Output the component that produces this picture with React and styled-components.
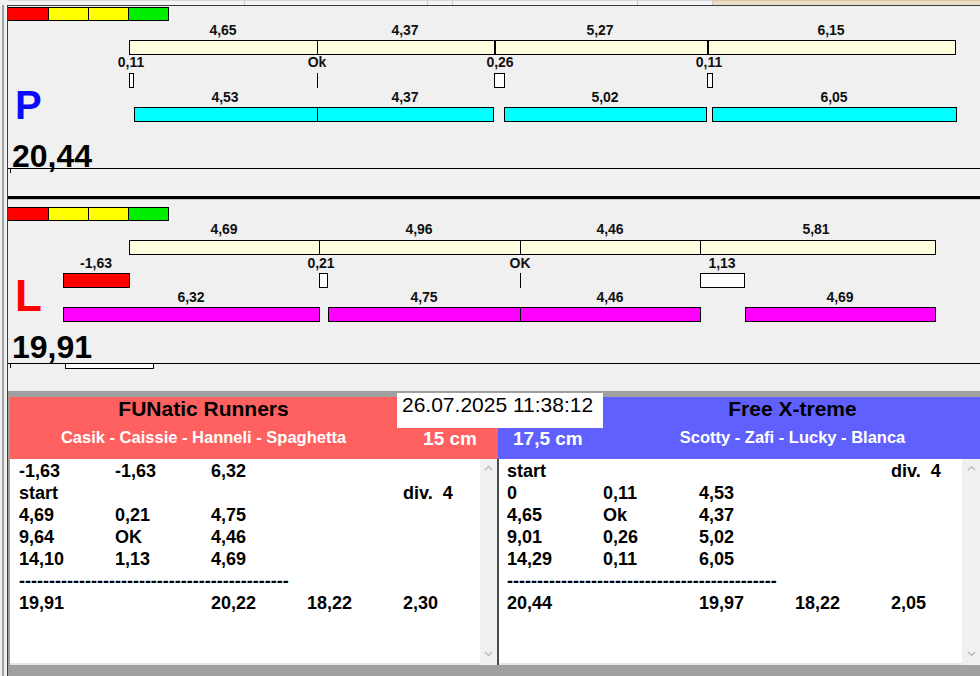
import React from 'react';
import styled, { createGlobalStyle } from 'styled-components';

const GlobalStyle = createGlobalStyle`
    html, body {
        margin: 0;
        padding: 0;
        background: #f0f0f0;
    }
    * {
        box-sizing: border-box;
    }
`;

// x values are screen coordinates, the chart panel begins at x = 8
const OX = 8;

const PANELS = [
    {
        letter: 'P',
        letterColor: '#0a0aff',
        letterSize: 40,
        total: '20,44',
        y: { strip: 1, r1: 17, bar: 34, r2: 49, mk: 67, r3: 84, bar2: 101, letter: 79, total: 134 },
        top: {
            x0: 129, x1: 956,
            cuts: [{ x: 317, w: 1 }, { x: 494, w: 2 }, { x: 707, w: 2 }],
            labels: [[223, '4,65'], [405, '4,37'], [600, '5,27'], [831, '6,15']],
        },
        marks: [
            { x: 129, w: 5, label: '0,11', lx: 131 },
            { x: 317, w: 0, label: 'Ok', lx: 317 },
            { x: 494, w: 11, label: '0,26', lx: 500 },
            { x: 707, w: 6, label: '0,11', lx: 709 },
        ],
        barColor: '#00ffff',
        bars: [
            { x0: 134, x1: 494, cuts: [317] },
            { x0: 504, x1: 707, cuts: [] },
            { x0: 712, x1: 957, cuts: [] },
        ],
        barLabels: [[225, '4,53'], [405, '4,37'], [605, '5,02'], [834, '6,05']],
        height: 162,
    },
    {
        letter: 'L',
        letterColor: '#ff0000',
        letterSize: 44,
        total: '19,91',
        y: { strip: 7, r1: 22, bar: 40, r2: 56, mk: 73, r3: 90, bar2: 107, letter: 74, total: 131 },
        top: {
            x0: 129, x1: 936,
            cuts: [{ x: 319, w: 1 }, { x: 520, w: 1 }, { x: 700, w: 1 }],
            labels: [[224, '4,69'], [419, '4,96'], [610, '4,46'], [816, '5,81']],
        },
        marks: [
            { x: 63, w: 67, label: '-1,63', lx: 96, red: true },
            { x: 319, w: 9, label: '0,21', lx: 321 },
            { x: 520, w: 0, label: 'OK', lx: 520 },
            { x: 700, w: 45, label: '1,13', lx: 722 },
        ],
        barColor: '#ff00ff',
        bars: [
            { x0: 63, x1: 320, cuts: [] },
            { x0: 328, x1: 701, cuts: [520] },
            { x0: 745, x1: 936, cuts: [] },
        ],
        barLabels: [[191, '6,32'], [424, '4,75'], [610, '4,46'], [840, '4,69']],
        height: 163,
    },
];

const STRIP = ['#ff0000', '#ffff00', '#ffff00', '#00ee00'];

const LEFT_ROWS = [
    ['-1,63', '-1,63', '6,32', '', ''],
    ['start', '', '', '', 'div.  4'],
    ['4,69', '0,21', '4,75', '', ''],
    ['9,64', 'OK', '4,46', '', ''],
    ['14,10', '1,13', '4,69', '', ''],
    'dash',
    ['19,91', '', '20,22', '18,22', '2,30'],
];

const RIGHT_ROWS = [
    ['start', '', '', '', 'div.  4'],
    ['0', '0,11', '4,53', '', ''],
    ['4,65', 'Ok', '4,37', '', ''],
    ['9,01', '0,26', '5,02', '', ''],
    ['14,29', '0,11', '6,05', '', ''],
    'dash',
    ['20,44', '', '19,97', '18,22', '2,05'],
];

function Chevron({ down }) {
    return (
        <svg width="9" height="6" viewBox="0 0 9 6">
            <polyline
                points={down ? '1,1 4.5,4.5 8,1' : '1,5 4.5,1.5 8,5'}
                fill="none"
                stroke="#b4b4b4"
                strokeWidth="1.2"
            />
        </svg>
    );
}

function ChartPanel({ data }) {
    const { y } = data;
    return (
        <Panel $h={data.height}>
            <Strip style={{ top: y.strip }}>
                {STRIP.map((c, i) => <StripCell key={i} $color={c} />)}
            </Strip>

            {data.top.labels.map(([x, t]) => (
                <Label key={'t' + x} style={{ left: x - OX, top: y.r1 }}>{t}</Label>
            ))}
            <Bar $color="#ffffe0" style={{ left: data.top.x0 - OX, width: data.top.x1 - data.top.x0, top: y.bar }}>
                {data.top.cuts.map((c) => (
                    <Cut key={c.x} style={{ left: c.x - data.top.x0 - 1, width: c.w }} />
                ))}
            </Bar>

            {data.marks.map((m) => (
                <React.Fragment key={'m' + m.x}>
                    <Label style={{ left: m.lx - OX, top: y.r2 }}>{m.label}</Label>
                    {m.w > 0
                        ? <Marker $red={m.red} style={{ left: m.x - OX, width: m.w, top: y.mk }} />
                        : <MarkLine style={{ left: m.x - OX, top: y.mk }} />}
                </React.Fragment>
            ))}

            {data.barLabels.map(([x, t]) => (
                <Label key={'b' + x} style={{ left: x - OX, top: y.r3 }}>{t}</Label>
            ))}
            {data.bars.map((b) => (
                <Bar key={b.x0} $color={data.barColor} style={{ left: b.x0 - OX, width: b.x1 - b.x0, top: y.bar2 }}>
                    {b.cuts.map((c) => (
                        <Cut key={c} style={{ left: c - b.x0 - 1, width: 1 }} />
                    ))}
                </Bar>
            ))}

            <Letter $color={data.letterColor} $size={data.letterSize} style={{ top: y.letter }}>
                {data.letter}
            </Letter>
            <Total style={{ top: y.total }}>{data.total}</Total>
        </Panel>
    );
}

function ListBox({ rows, pad, width, barWidth }) {
    return (
        <ListWrap $w={width}>
            <TextArea $pad={pad}>
                {rows.map((r, i) =>
                    r === 'dash'
                        ? <Row key={i}><Dashes>{'-'.repeat(45)}</Dashes></Row>
                        : <Row key={i}>{r.map((c, j) => <Cell key={j}>{c}</Cell>)}</Row>
                )}
            </TextArea>
            <ScrollBar $w={barWidth}>
                <Chevron />
                <Chevron down />
            </ScrollBar>
        </ListWrap>
    );
}

export default function App() {
    return (
        <Window>
            <GlobalStyle />
            <TopStrip>
                <Tab $w={237} />
                <Tab $w={183} />
                <Tab $w={25} />
                <Tab $w={185} />
                <Tab $w={75} />
                <TanTab />
            </TopStrip>
            <Body>
                <Edge />
                <Main>
                    <ChartPanel data={PANELS[0]} />
                    <Gap>
                        <Tick />
                    </Gap>
                    <ThickLine />
                    <ChartPanel data={PANELS[1]} />
                    <Gap>
                        <Tick />
                        <Slot />
                    </Gap>
                    <Bottom>
                        <Headers>
                            <TeamHead $color="#ff6060" $w={488}>
                                <TitleArea $w={387}>
                                    <TeamName>FUNatic Runners</TeamName>
                                    <Members>Casik - Caissie - Hanneli - Spaghetta</Members>
                                </TitleArea>
                                <CmArea $align="center" $pad="0 0 0 5px">15 cm</CmArea>
                            </TeamHead>
                            <TeamHead $color="#6060ff">
                                <CmArea $w={107} $align="left" $pad="0 0 0 15px">17,5 cm</CmArea>
                                <TitleArea>
                                    <TeamName>Free X-treme</TeamName>
                                    <Members>Scotty - Zafi - Lucky - Blanca</Members>
                                </TitleArea>
                            </TeamHead>
                            <DateBox>26.07.2025 11:38:12</DateBox>
                        </Headers>
                        <Lists>
                            <ListBox rows={LEFT_ROWS} pad={9} width={487} barWidth={17} />
                            <Divider />
                            <ListBox rows={RIGHT_ROWS} pad={8} width={481} barWidth={18} />
                        </Lists>
                    </Bottom>
                </Main>
            </Body>
        </Window>
    );
}

const Window = styled.div`
    width: 980px;
    height: 676px;
    overflow: hidden;
    display: flex;
    flex-direction: column;
    background: #f0f0f0;
    font-family: "Liberation Sans", Arial, sans-serif;
    color: #000;
`;
const TopStrip = styled.div`
    height: 5px;
    display: flex;
    flex-shrink: 0;
    padding-left: 8px;
`;
const Tab = styled.div`
    width: ${(p) => p.$w}px;
    border-top: 1px solid #d6d6d6;
    border-right: 1px solid #c8c8c8;
    background: #f4f4f4;
`;
const TanTab = styled.div`
    flex: 1;
    background: #ecdfc8;
    border-top: 1px solid #d8c8a8;
`;
const Body = styled.div`
    flex: 1;
    display: flex;
    min-height: 0;
`;
const Edge = styled.div`
    width: 7px;
    flex-shrink: 0;
    background: linear-gradient(to right, #f0f0f0 2px, #a0a0a0 2px, #a0a0a0 4px, #f0f0f0 4px);
`;
const Main = styled.div`
    flex: 1;
    min-width: 0;
    display: flex;
    flex-direction: column;
    border-left: 1px solid #3c3c3c;
    border-top: 1px solid #3c3c3c;
`;
const Panel = styled.div`
    position: relative;
    height: ${(p) => p.$h + 1}px;
    border-bottom: 1px solid #000;
    flex-shrink: 0;
`;
const Strip = styled.div`
    position: absolute;
    left: 0;
    display: flex;
    height: 14px;
    border: 1px solid #000;
    border-left: 0;
`;
const StripCell = styled.div`
    width: 40px;
    background: ${(p) => p.$color};
    & + & {
        border-left: 1px solid #000;
    }
`;
const Label = styled.div`
    position: absolute;
    transform: translateX(-50%);
    font-size: 14px;
    font-weight: bold;
    line-height: 14px;
    white-space: nowrap;
    color: #111;
`;
const Bar = styled.div`
    position: absolute;
    height: 15px;
    background: ${(p) => p.$color};
    border: 1px solid #000;
`;
const Cut = styled.div`
    position: absolute;
    top: 0;
    bottom: 0;
    background: #000;
`;
const Marker = styled.div`
    position: absolute;
    height: 15px;
    background: ${(p) => (p.$red ? '#ff0000' : '#fff')};
    border: 1px solid #000;
`;
const MarkLine = styled.div`
    position: absolute;
    width: 1px;
    height: 15px;
    background: #000;
`;
const Letter = styled.div`
    position: absolute;
    left: 7px;
    font-size: ${(p) => p.$size}px;
    line-height: ${(p) => p.$size}px;
    font-weight: bold;
    color: ${(p) => p.$color};
`;
const Total = styled.div`
    position: absolute;
    left: 4px;
    font-size: 32px;
    line-height: 32px;
    font-weight: bold;
`;
const Gap = styled.div`
    position: relative;
    height: 27px;
    flex-shrink: 0;
`;
const Tick = styled.div`
    position: absolute;
    left: 2px;
    top: 0;
    width: 1px;
    height: 4px;
    background: #000;
`;
const Slot = styled.div`
    position: absolute;
    left: 57px;
    top: -1px;
    width: 89px;
    height: 6px;
    background: #fff;
    border: 1px solid #000;
`;
const ThickLine = styled.div`
    height: 4px;
    flex-shrink: 0;
    background: #000;
    border-bottom: 1px solid #c8c8c8;
`;
const Bottom = styled.div`
    flex: 1;
    min-height: 0;
    display: flex;
    flex-direction: column;
    background: #a0a0a0;
    padding: 6px 0 11px 2px;
`;
const Headers = styled.div`
    position: relative;
    display: flex;
    height: 62px;
    flex-shrink: 0;
`;
const TeamHead = styled.div`
    display: flex;
    width: ${(p) => (p.$w ? `${p.$w}px` : 'auto')};
    flex: ${(p) => (p.$w ? 'none' : '1')};
    min-width: 0;
    background: ${(p) => p.$color};
`;
const TitleArea = styled.div`
    width: ${(p) => (p.$w ? `${p.$w}px` : 'auto')};
    flex: ${(p) => (p.$w ? 'none' : '1')};
    display: flex;
    flex-direction: column;
    align-items: center;
`;
const TeamName = styled.div`
    font-size: 21px;
    line-height: 23px;
    font-weight: bold;
    color: #000;
    white-space: nowrap;
`;
const Members = styled.div`
    margin-top: 7px;
    font-size: 16.5px;
    line-height: 20px;
    font-weight: bold;
    color: #fff;
    white-space: nowrap;
`;
const CmArea = styled.div`
    width: ${(p) => (p.$w ? `${p.$w}px` : 'auto')};
    flex: ${(p) => (p.$w ? 'none' : '1')};
    padding: ${(p) => p.$pad};
    margin-top: 31px;
    text-align: ${(p) => p.$align};
    font-size: 19px;
    line-height: 22px;
    font-weight: bold;
    color: #fff;
    white-space: nowrap;
`;
const DateBox = styled.div`
    position: absolute;
    left: 387px;
    top: -4px;
    width: 206px;
    height: 35px;
    padding-left: 5px;
    background: #fff;
    font-size: 21px;
    line-height: 23px;
    white-space: nowrap;
`;
const Lists = styled.div`
    flex: 1;
    display: flex;
    min-height: 0;
`;
const ListWrap = styled.div`
    display: flex;
    width: ${(p) => p.$w}px;
    flex-shrink: 0;
    background: #fff;
`;
const TextArea = styled.div`
    flex: 1;
    min-width: 0;
    overflow: hidden;
    padding: 1px 0 0 ${(p) => p.$pad}px;
    border-bottom: 2px solid #e6e6e6;
`;
const Row = styled.div`
    display: grid;
    grid-template-columns: repeat(5, 96px);
    height: 22px;
    font-size: 18px;
    line-height: 22px;
    font-weight: bold;
    white-space: pre;
`;
const Cell = styled.div``;
const Dashes = styled.div`
    grid-column: 1 / -1;
`;
const ScrollBar = styled.div`
    width: ${(p) => p.$w}px;
    flex-shrink: 0;
    background: #f0f0f0;
    display: flex;
    flex-direction: column;
    align-items: center;
    justify-content: space-between;
    padding: 6px 0 8px;
`;
const Divider = styled.div`
    width: 2px;
    flex-shrink: 0;
    background: #4a4a4a;
`;
